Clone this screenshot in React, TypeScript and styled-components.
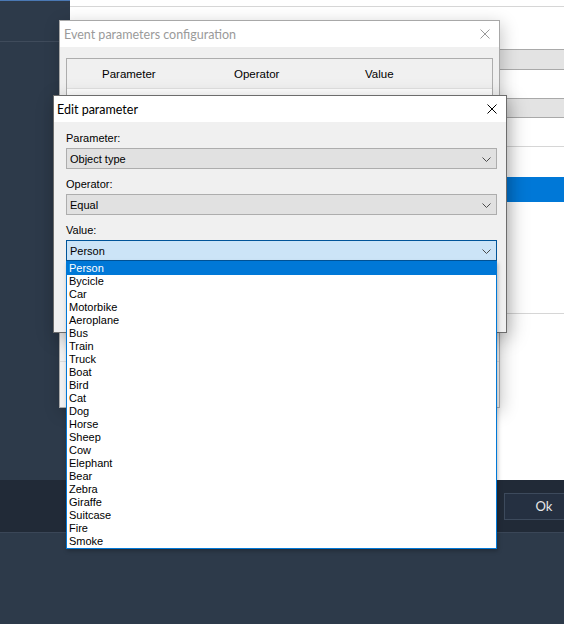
import styled, { createGlobalStyle } from "styled-components";

const GlobalStyle = createGlobalStyle`
  html, body {
    margin: 0;
    padding: 0;
    background: #2d3a4a;
    overflow: hidden;
  }
  * {
    box-sizing: border-box;
  }
`;

const VALUES = [
  "Person",
  "Bycicle",
  "Car",
  "Motorbike",
  "Aeroplane",
  "Bus",
  "Train",
  "Truck",
  "Boat",
  "Bird",
  "Cat",
  "Dog",
  "Horse",
  "Sheep",
  "Cow",
  "Elephant",
  "Bear",
  "Zebra",
  "Giraffe",
  "Suitcase",
  "Fire",
  "Smoke",
];

const Close = ({ color }: { color: string }) => (
  <svg width="10" height="10" viewBox="0 0 10 10">
    <path d="M0.5 0.5 L9.5 9.5 M9.5 0.5 L0.5 9.5" stroke={color} strokeWidth="1" fill="none" />
  </svg>
);

const Chevron = () => (
  <svg width="9" height="5" viewBox="0 0 9 5">
    <path d="M0.5 0.5 L4.5 4.5 L8.5 0.5" stroke="#4a4a4a" strokeWidth="1" fill="none" />
  </svg>
);

export default function App() {
  return (
    <>
      <GlobalStyle />
      <Desktop>
        <MainArea>
          <Sidebar>
            <SidebarHeader />
          </Sidebar>
          <Content>
            <Rule $top={6} />
            <Band $top={42} $height={21} />
            <Band $top={28} $height={20} />
            <Rule $top={28} />
            <Band $top={30} $height={25} $selected />
            <Rule $top={111} />
          </Content>
        </MainArea>
        <FooterBar>
          <OkButton>Ok</OkButton>
        </FooterBar>

        <EventWindow>
          <TitleBar $inactive>
            <span>Event parameters configuration</span>
            <Close color="#9a9a9a" />
          </TitleBar>
          <EventBody>
            <ListView>
              <ListHeader>
                <span>Parameter</span>
                <span>Operator</span>
                <span>Value</span>
              </ListHeader>
            </ListView>
            <WindowFooter $height={46} />
          </EventBody>
        </EventWindow>

        <EditWindow>
          <TitleBar>
            <span>Edit parameter</span>
            <Close color="#000" />
          </TitleBar>
          <EditBody>
            <FieldLabel>Parameter:</FieldLabel>
            <Combo>
              <span>Object type</span>
              <Chevron />
            </Combo>
            <FieldLabel>Operator:</FieldLabel>
            <Combo>
              <span>Equal</span>
              <Chevron />
            </Combo>
            <FieldLabel>Value:</FieldLabel>
            <ComboHolder>
              <Combo $open>
                <span>Person</span>
                <Chevron />
              </Combo>
              <DropList>
                {VALUES.map((v, i) => (
                  <DropItem key={v} $active={i === 0}>
                    {v}
                  </DropItem>
                ))}
              </DropList>
            </ComboHolder>
            <WindowFooter $height={45} />
          </EditBody>
        </EditWindow>
      </Desktop>
    </>
  );
}

const Desktop = styled.div`
  position: relative;
  width: 564px;
  height: 624px;
  display: grid;
  grid-template-rows: 480px 53px 1fr;
  background: #2d3a4a;
`;

const MainArea = styled.div`
  display: grid;
  grid-template-columns: 70px 1fr;
`;

const Sidebar = styled.div`
  background: #2d3a4a;
  border-top: 1px solid #4a78b4;
`;

const SidebarHeader = styled.div`
  height: 41px;
  border-bottom: 1px solid #3f4b5b;
`;

const Content = styled.div`
  background: #fff;
  display: flex;
  flex-direction: column;
`;

const Rule = styled.div<{ $top: number }>`
  margin-top: ${(p) => p.$top}px;
  height: 1px;
  background: #d6d6d6;
  flex-shrink: 0;
`;

const Band = styled.div<{ $top: number; $height: number; $selected?: boolean }>`
  margin-top: ${(p) => p.$top}px;
  height: ${(p) => p.$height}px;
  flex-shrink: 0;
  background: ${(p) => (p.$selected ? "#0078d7" : "#e3e3e3")};
  border-top: 1px solid ${(p) => (p.$selected ? "#0078d7" : "#a9a9a9")};
  border-bottom: 1px solid ${(p) => (p.$selected ? "#0078d7" : "#a9a9a9")};
`;

const FooterBar = styled.div`
  background: #212a37;
  border-bottom: 1px solid #3a4657;
  display: flex;
  justify-content: flex-end;
  align-items: center;
  overflow: hidden;
`;

const OkButton = styled.div`
  width: 80px;
  height: 27px;
  margin-right: -20px;
  background: #253041;
  border: 1px solid #3d4a5c;
  color: #e8e8e8;
  font-family: "Segoe UI", Lato, "Liberation Sans", sans-serif;
  font-size: 13px;
  display: flex;
  align-items: center;
  justify-content: center;
`;

const Window = styled.div`
  position: absolute;
  display: flex;
  flex-direction: column;
  background: #f0f0f0;
`;

const EventWindow = styled(Window)`
  left: 59px;
  top: 20px;
  width: 441px;
  height: 388px;
  border: 1px solid #a8a8a8;
  box-shadow: 2px 4px 16px rgba(0, 0, 0, 0.22);
`;

const EditWindow = styled(Window)`
  left: 53px;
  top: 95px;
  width: 454px;
  height: 238px;
  border: 1px solid #6c6c6c;
  box-shadow: 3px 5px 18px rgba(0, 0, 0, 0.28);
`;

const TitleBar = styled.div<{ $inactive?: boolean }>`
  height: 26px;
  flex-shrink: 0;
  background: #fff;
  display: flex;
  align-items: center;
  justify-content: space-between;
  padding: 0 9px 0 ${(p) => (p.$inactive ? 4 : 3)}px;
  font-family: "Segoe UI", Lato, "Liberation Sans", sans-serif;
  font-size: 12.5px;
  color: ${(p) => (p.$inactive ? "#9a9a9a" : "#000")};
`;

const EventBody = styled.div`
  flex: 1;
  display: flex;
  flex-direction: column;
  padding-top: 11px;
`;

const ListView = styled.div`
  flex: 1;
  margin: 0 6px;
  border: 1px solid #adadad;
  background: #fff;
`;

const ListHeader = styled.div`
  height: 30px;
  background: #f0f0f0;
  border-bottom: 1px solid #e2e2e2;
  display: grid;
  grid-template-columns: 132px 131px 1fr;
  align-items: center;
  padding-left: 35px;
  font-family: "Liberation Sans", Arial, sans-serif;
  font-size: 11.5px;
  color: #000;
`;

const WindowFooter = styled.div<{ $height: number }>`
  height: ${(p) => p.$height}px;
  flex-shrink: 0;
  margin-top: auto;
  border-top: 1px solid #dadada;
  background: #f0f0f0;
`;

const EditBody = styled.div`
  flex: 1;
  display: flex;
  flex-direction: column;
  padding: 9px 9px 0 12px;
`;

const FieldLabel = styled.div`
  height: 14px;
  line-height: 14px;
  margin-bottom: 3px;
  font-family: "Liberation Sans", Arial, sans-serif;
  font-size: 11px;
  color: #000;
  div + & {
    margin-top: 8px;
  }
`;

const ComboHolder = styled.div`
  position: relative;
  z-index: 2;
`;

const Combo = styled.div<{ $open?: boolean }>`
  height: 21px;
  display: flex;
  align-items: center;
  justify-content: space-between;
  padding: 0 5px 0 3px;
  background: ${(p) => (p.$open ? "#cce4f7" : "#e1e1e1")};
  border: 1px solid ${(p) => (p.$open ? "#005499" : "#adadad")};
  font-family: "Liberation Sans", Arial, sans-serif;
  font-size: 11px;
  color: #000;
  svg {
    margin-top: 1px;
  }
`;

const DropList = styled.div`
  position: absolute;
  top: 100%;
  left: 0;
  right: 0;
  background: #fff;
  border: 1px solid #0078d7;
  box-shadow: 1px 2px 4px rgba(0, 0, 0, 0.25);
`;

const DropItem = styled.div<{ $active?: boolean }>`
  height: 13px;
  line-height: 13px;
  padding-left: 2px;
  font-family: "Liberation Sans", Arial, sans-serif;
  font-size: 11px;
  background: ${(p) => (p.$active ? "#0078d7" : "transparent")};
  color: ${(p) => (p.$active ? "#fff" : "#000")};
  white-space: nowrap;
`;
